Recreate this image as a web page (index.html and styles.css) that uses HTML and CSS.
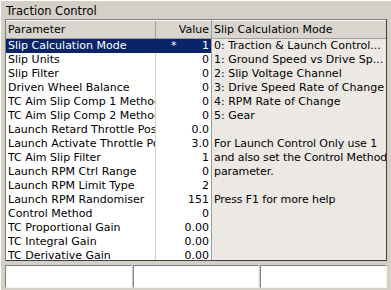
FILE: index.html
```html
<!DOCTYPE html>
<html lang="en">
<head>
  <meta charset="UTF-8">
  <title>Traction Control</title>
  <link rel="stylesheet" href="styles.css">
</head>
<body>
  <div class="window">
    <div class="title">Traction Control</div>

    <div class="main">
      <div class="grid">
        <div class="row head">
          <div class="param">Parameter</div>
          <div class="value">Value</div>
        </div>
        <div class="rows">
          <div class="row selected"><div class="param">Slip Calculation Mode</div><div class="value"><span class="star">*</span>1</div></div>
          <div class="row"><div class="param">Slip Units</div><div class="value">0</div></div>
          <div class="row"><div class="param">Slip Filter</div><div class="value">0</div></div>
          <div class="row"><div class="param">Driven Wheel Balance</div><div class="value">0</div></div>
          <div class="row"><div class="param">TC Aim Slip Comp 1 Method</div><div class="value">0</div></div>
          <div class="row"><div class="param">TC Aim Slip Comp 2 Method</div><div class="value">0</div></div>
          <div class="row"><div class="param">Launch Retard Throttle Position</div><div class="value">0.0</div></div>
          <div class="row"><div class="param">Launch Activate Throttle Position</div><div class="value">3.0</div></div>
          <div class="row"><div class="param">TC Aim Slip Filter</div><div class="value">1</div></div>
          <div class="row"><div class="param">Launch RPM Ctrl Range</div><div class="value">0</div></div>
          <div class="row"><div class="param">Launch RPM Limit Type</div><div class="value">2</div></div>
          <div class="row"><div class="param">Launch RPM Randomiser</div><div class="value">151</div></div>
          <div class="row"><div class="param">Control Method</div><div class="value">0</div></div>
          <div class="row"><div class="param">TC Proportional Gain</div><div class="value">0.00</div></div>
          <div class="row"><div class="param">TC Integral Gain</div><div class="value">0.00</div></div>
          <div class="row"><div class="param">TC Derivative Gain</div><div class="value">0.00</div></div>
        </div>
      </div>

      <div class="help">
        <div class="help-head">Slip Calculation Mode</div>
        <div class="help-body">
          <p class="line">0: Traction &amp; Launch Control...</p>
          <p class="line">1: Ground Speed vs Drive Sp...</p>
          <p class="line">2: Slip Voltage Channel</p>
          <p class="line">3: Drive Speed Rate of Change</p>
          <p class="line">4: RPM Rate of Change</p>
          <p class="line">5: Gear</p>
          <p class="gap">For Launch Control Only use 1<br>and also set the Control Method<br>parameter.</p>
          <p class="gap">Press F1 for more help</p>
        </div>
      </div>
    </div>

    <div class="status">
      <div class="panel"></div>
      <div class="panel"></div>
      <div class="panel"></div>
    </div>
  </div>
</body>
</html>
```

FILE: styles.css
```css
* {
  margin: 0;
  padding: 0;
  box-sizing: border-box;
}

body {
  background-color: #d4d0c8;
  font-family: 'DejaVu Sans', Verdana, sans-serif;
  font-size: 11px;
  color: #000;
}

.window {
  width: 391px;
  height: 290px;
  overflow: hidden;
  border-left: 1px solid #fff;
  border-top: 1px solid #fff;
}

/* Title */
.title {
  height: 18px;
  padding: 3px 0 0 5px;
  line-height: 14px;
  font-size: 11.5px;
}

/* Grid + help */
.main {
  display: flex;
  height: 242px;
  margin: 0 4px 0 4px;
  border: 1px solid #808080;
  border-right-color: #404040;
  border-bottom-color: #404040;
}

.grid {
  width: 205px;
  background-color: #fff;
  display: flex;
  flex-direction: column;
}

.row {
  display: flex;
  height: 14px;
  line-height: 14px;
  white-space: nowrap;
}

.row .param {
  width: 150px;
  padding-left: 2px;
  overflow: hidden;
  border-right: 1px solid #d4d0c8;
}

.row .value {
  flex: 1;
  text-align: right;
  padding-right: 2px;
  position: relative;
}

.row.head {
  height: 19px;
  line-height: 18px;
  background-color: #d8d5cf;
  border-top: 1px solid #fff;
  border-bottom: 1px solid #a09d97;
}

.row.head .param {
  border-right: 1px solid #a09d97;
}

.row.selected {
  background-color: #0a246a;
  color: #fff;
}

.row.selected .param {
  border-right-color: #0a246a;
}

.star {
  position: absolute;
  left: 15px;
  top: 0;
}

.rows {
  flex: 1;
  overflow: hidden;
}

.help {
  flex: 1;
  min-width: 0;
  background-color: #ece9e5;
  border-left: 1px solid #a09d97;
  display: flex;
  flex-direction: column;
}

.help-head {
  height: 19px;
  line-height: 18px;
  padding-left: 2px;
  background-color: #d8d5cf;
  border-top: 1px solid #fff;
  border-bottom: 1px solid #a09d97;
  white-space: nowrap;
}

.help-body {
  padding: 0 0 0 2px;
  line-height: 14px;
  white-space: nowrap;
  overflow: hidden;
}

.help-body .line {
  overflow: hidden;
}

.help-body .gap {
  margin-top: 14px;
  letter-spacing: -0.1px;
}

/* Status bar */
.status {
  display: flex;
  gap: 1px;
  height: 23px;
  margin: 4px 4px 0 4px;
}

.panel {
  flex: 1;
  background-color: #fff;
  border-top: 1px solid #808080;
  border-left: 1px solid #808080;
  border-right: 1px solid #f4f3ee;
  border-bottom: 1px solid #f4f3ee;
}
```
